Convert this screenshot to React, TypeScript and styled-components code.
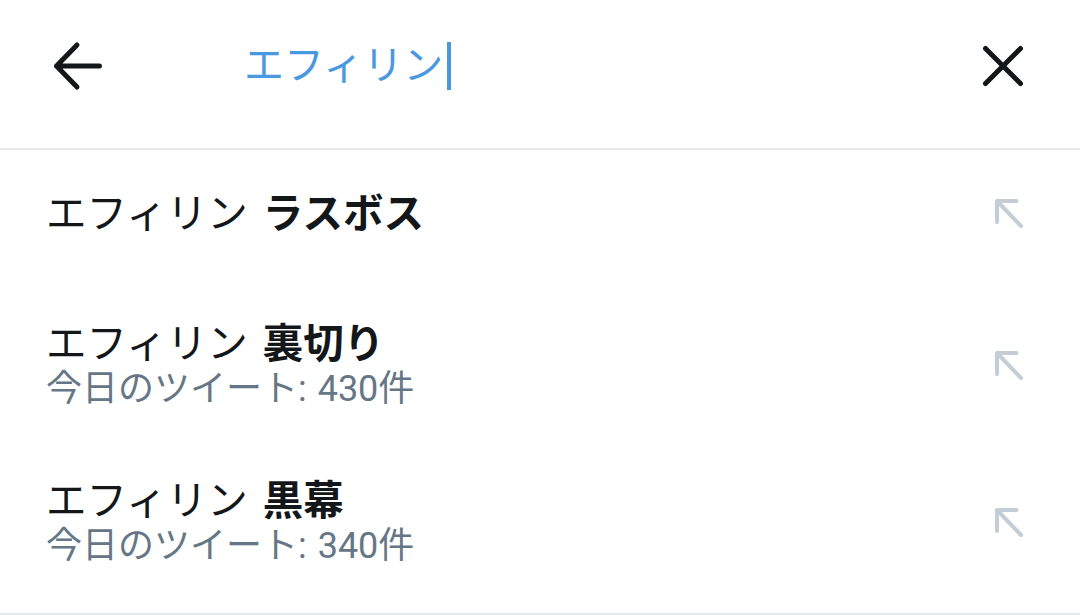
import styled, { createGlobalStyle } from "styled-components";

const GlobalStyle = createGlobalStyle`
  html, body {
    margin: 0;
    padding: 0;
    background: #ffffff;
  }
  body {
    font-family: Roboto, "Noto Sans CJK JP", sans-serif;
    -webkit-font-smoothing: antialiased;
  }
`;

type Suggestion = {
  query: string;
  extra: string;
  count?: number;
};

const suggestions: Suggestion[] = [
  { query: "エフィリン", extra: "ラスボス" },
  { query: "エフィリン", extra: "裏切り", count: 430 },
  { query: "エフィリン", extra: "黒幕", count: 340 },
];

const BackIcon = () => (
  <svg width="50" height="50" viewBox="0 0 50 50" fill="none">
    <path
      d="M3.5 25 H46.5 M24 4 L3.5 25 L24 46"
      stroke="#14171a"
      strokeWidth="5"
      strokeLinecap="round"
      strokeLinejoin="round"
    />
  </svg>
);

const CloseIcon = () => (
  <svg width="44" height="44" viewBox="0 0 44 44" fill="none">
    <path
      d="M4.5 4.5 L39.5 39.5 M39.5 4.5 L4.5 39.5"
      stroke="#14171a"
      strokeWidth="5"
      strokeLinecap="round"
    />
  </svg>
);

const FillIcon = () => (
  <svg width="32" height="34" viewBox="0 0 32 34" fill="none">
    <path
      d="M4 4 L28 29 M4 4 H23.5 M4 4 V25"
      stroke="#c2cdd6"
      strokeWidth="4"
      strokeLinecap="round"
      strokeLinejoin="round"
    />
  </svg>
);

const App = () => {
  return (
    <>
      <GlobalStyle />
      <Page>
        <SearchHeader>
          <IconButton aria-label="戻る">
            <BackIcon />
          </IconButton>
          <SearchField>
            <SearchText>エフィリン</SearchText>
            <Caret />
          </SearchField>
          <IconButton aria-label="クリア">
            <CloseIcon />
          </IconButton>
        </SearchHeader>

        <SuggestionList>
          {suggestions.map((s, i) => (
            <SuggestionRow key={i} $single={s.count === undefined}>
              <RowText>
                <Title>
                  {s.query} <strong>{s.extra}</strong>
                </Title>
                {s.count !== undefined && (
                  <Meta>今日のツイート: {s.count}件</Meta>
                )}
              </RowText>
              <FillButton aria-label="入力">
                <FillIcon />
              </FillButton>
            </SuggestionRow>
          ))}
        </SuggestionList>
      </Page>
    </>
  );
};

const Page = styled.div`
  width: 1080px;
  min-height: 615px;
  background: #ffffff;
`;

const SearchHeader = styled.header`
  display: flex;
  align-items: center;
  box-sizing: border-box;
  height: 150px;
  padding: 0 55px 16px 53px;
  border-bottom: 2px solid #e3e8eb;
`;

const IconButton = styled.button`
  display: flex;
  align-items: center;
  justify-content: center;
  padding: 0;
  border: none;
  background: none;
  cursor: pointer;
`;

const SearchField = styled.div`
  flex: 1;
  display: flex;
  align-items: center;
  margin-left: 141px;
  height: 50px;
`;

const SearchText = styled.span`
  font-size: 40px;
  line-height: 48px;
  color: #4a98df;
`;

const Caret = styled.span`
  display: block;
  width: 4px;
  height: 48px;
  margin-left: 4px;
  background: #4a98df;
`;

const SuggestionList = styled.ul`
  list-style: none;
  margin: 0;
  padding: 0 0 12px;
  border-bottom: 2px solid #e3e8eb;
`;

const SuggestionRow = styled.li<{ $single: boolean }>`
  display: flex;
  align-items: center;
  justify-content: space-between;
  padding: ${(p) => (p.$single ? "40px 55px 49px 46px" : "33px 55px 33px 46px")};
`;

const RowText = styled.div`
  display: flex;
  flex-direction: column;
`;

const Title = styled.div`
  font-size: 40.5px;
  line-height: 48px;
  word-spacing: 5px;
  color: #14171a;
  white-space: nowrap;

  strong {
    font-weight: 700;
  }
`;

const Meta = styled.div`
  font-size: 36px;
  line-height: 43px;
  word-spacing: 2px;
  color: #657786;
  white-space: nowrap;
`;

const FillButton = styled.button`
  display: flex;
  padding: 0;
  border: none;
  background: none;
  cursor: pointer;
`;

export default App;
